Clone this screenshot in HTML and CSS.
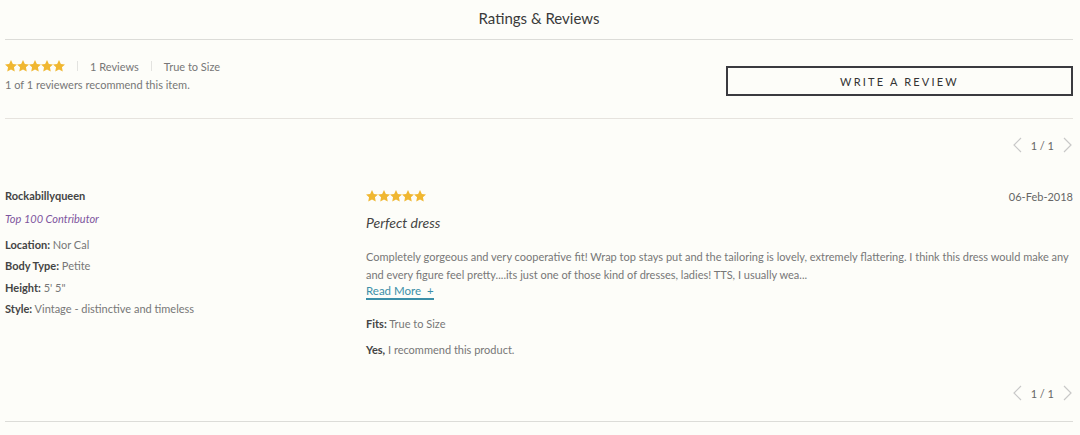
FILE: index.html
```html
<!DOCTYPE html>
<html>
<head>
<meta charset="utf-8">
<link rel="stylesheet" href="styles.css">
</head>
<body>
<div class="wrap">
  <h2 class="title">Ratings &amp; Reviews</h2>
  <div class="summary">
    <div class="sum-left">
      <div class="sum-row">
        <span class="stars">
          <svg viewBox="0 0 60 13" width="60" height="13"><g fill="#f0b731">
            <path id="s" d="M6 0l1.85 3.9 4.15 0.5-3.05 2.9 0.8 4.2L6 9.45 2.25 11.5l0.8-4.2L0 4.4l4.15-0.5z"/>
            <use href="#s" x="12"/><use href="#s" x="24"/><use href="#s" x="36"/><use href="#s" x="48"/></g></svg>
        </span>
        <span class="sep"></span>
        <span class="muted">1 Reviews</span>
        <span class="sep"></span>
        <span class="muted">True to Size</span>
      </div>
      <div class="recommend">1 of 1 reviewers recommend this item.</div>
    </div>
    <button class="write">WRITE A REVIEW</button>
  </div>
  <div class="pager">
    <svg class="chev" viewBox="0 0 10 16" width="10" height="16"><path d="M9 1L2 8l7 7" fill="none" stroke="#c8c8c8" stroke-width="1.2"/></svg>
    <span class="pages">1 / 1</span>
    <svg class="chev" viewBox="0 0 10 16" width="10" height="16"><path d="M1 1l7 7-7 7" fill="none" stroke="#c8c8c8" stroke-width="1.2"/></svg>
  </div>
  <div class="review">
    <div class="reviewer">
      <div class="name">Rockabillyqueen</div>
      <div class="badge">Top 100 Contributor</div>
      <div class="attr first"><b>Location:</b> Nor Cal</div>
      <div class="attr"><b>Body Type:</b> Petite</div>
      <div class="attr"><b>Height:</b> 5' 5"</div>
      <div class="attr"><b>Style:</b> Vintage - distinctive and timeless</div>
    </div>
    <div class="content">
      <div class="content-top">
        <svg viewBox="0 0 60 13" width="60" height="13"><g fill="#f0b731">
          <path id="s2" d="M6 0l1.85 3.9 4.15 0.5-3.05 2.9 0.8 4.2L6 9.45 2.25 11.5l0.8-4.2L0 4.4l4.15-0.5z"/>
          <use href="#s2" x="12"/><use href="#s2" x="24"/><use href="#s2" x="36"/><use href="#s2" x="48"/></g></svg>
        <span class="date">06-Feb-2018</span>
      </div>
      <div class="headline">Perfect dress</div>
      <p class="text">Completely gorgeous and very cooperative fit! Wrap top stays put and the tailoring is lovely, extremely flattering. I think this dress would make any and every figure feel pretty....its just one of those kind of dresses, ladies! TTS, I usually wea...</p>
      <a class="more">Read More &nbsp;+</a>
      <div class="attr fits"><b>Fits:</b> True to Size</div>
      <div class="attr yes"><b>Yes,</b> I recommend this product.</div>
    </div>
  </div>
  <div class="pager bottom">
    <svg class="chev" viewBox="0 0 10 16" width="10" height="16"><path d="M9 1L2 8l7 7" fill="none" stroke="#c8c8c8" stroke-width="1.2"/></svg>
    <span class="pages">1 / 1</span>
    <svg class="chev" viewBox="0 0 10 16" width="10" height="16"><path d="M1 1l7 7-7 7" fill="none" stroke="#c8c8c8" stroke-width="1.2"/></svg>
  </div>
</div>
</body>
</html>
```
FILE: styles.css
```css
* { box-sizing: border-box; }
html, body { margin: 0; background: #fdfdf9; }
body { font-family: Lato, "Noto Sans", sans-serif; color: #777; font-size: 11px; letter-spacing: 0; }
.wrap { padding: 0 7px 0 5px; }
.title {
  margin: 0; height: 40px; line-height: 36px; text-align: center;
  font-size: 15px; font-weight: 400; color: #3a3a3a; letter-spacing: 0;
  border-bottom: 1px solid #dcdcd8;
}
.summary {
  display: flex; justify-content: space-between; align-items: flex-start;
  height: 79px; padding-top: 19px; border-bottom: 1px solid #e6e3de;
}
.sum-row { display: flex; align-items: center; height: 14px; }
.stars svg { display: block; }
.sep { width: 1px; height: 10px; background: #e3e3e0; margin: 0 12px; }
.muted { color: #777; }
.recommend { margin-top: 5px; }
.write {
  margin-top: 7px; width: 347px; height: 30px; background: transparent;
  border: 2px solid #3b3b40; font-family: inherit; font-size: 11px;
  letter-spacing: 2.2px; color: #333; padding: 0;
}
.pager { display: flex; justify-content: flex-end; align-items: center; gap: 9px; height: 52px; }
.pages { color: #666; font-size: 11px; }
.chev { display: block; }
.review { display: flex; padding-top: 16px; }
.reviewer { width: 361px; flex: none; }
.name { font-weight: 700; color: #444; line-height: 18px; }
.badge { color: #7d559e; font-style: italic; margin-top: 5px; line-height: 18px; }
.attr { line-height: 18px; margin-top: 3.5px; }
.attr b { color: #444; font-weight: 700; }
.reviewer .attr.first { margin-top: 7.5px; }
.content { flex: 1; }
.content-top { display: flex; justify-content: space-between; align-items: center; height: 18px; }
.content-top svg { display: block; }
.date { color: #666; }
.headline { font-style: italic; font-size: 14px; color: #444; margin-top: 9px; line-height: 18px; }
.text { margin: 16px 0 0; line-height: 18px; }
.more {
  display: inline-block; color: #3b8fa8; font-size: 11.5px; line-height: 14px;
  border-bottom: 2px solid #3b8fa8;
}
.fits { margin-top: 15px; }
.yes { margin-top: 8px; }
.pager.bottom { height: 63px; padding-top: 6px; border-bottom: 1px solid #dcdcd8; }
```
